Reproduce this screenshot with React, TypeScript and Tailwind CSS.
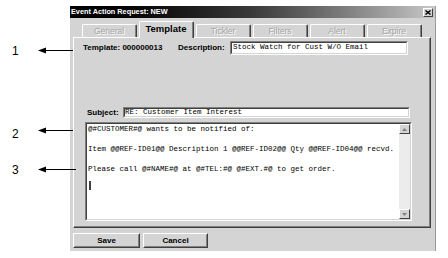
import React from "react";

const GRAY = "bg-[#d4d4d4]";

function Sunken({ className, innerClassName, children }: { className?: string; innerClassName?: string; children?: React.ReactNode }) {
  return (
    <div className={`border border-t-[#808080] border-l-[#808080] border-r-white border-b-white ${className ?? ""}`}>
      <div className={`w-full h-full border border-t-[#404040] border-l-[#404040] border-r-[#d4d4d4] border-b-[#d4d4d4] bg-white ${innerClassName ?? ""}`}>
        {children}
      </div>
    </div>
  );
}

function Raised({ className, children }: { className?: string; children?: React.ReactNode }) {
  return (
    <div className={`border border-t-white border-l-white border-r-[#404040] border-b-[#404040] ${className ?? ""}`}>
      <div className="w-full h-full border border-t-[#d4d4d4] border-l-[#d4d4d4] border-r-[#808080] border-b-[#808080] flex items-center justify-center">
        {children}
      </div>
    </div>
  );
}

function Tab({ label, active }: { label: string; active?: boolean }) {
  if (active) {
    return (
      <div className={`relative z-10 -mb-[1px] h-[17px] w-[55px] ${GRAY} border-t border-l border-r border-t-white border-l-white border-r-[#404040] rounded-t-[2px] flex items-start justify-center`}>
        <div className="w-full h-full border-r border-r-[#808080] flex items-center justify-center pb-[2px]">
          <span className="text-[9.5px] font-bold text-black leading-none">{label}</span>
        </div>
      </div>
    );
  }
  return (
    <div className={`h-[13px] w-[55px] ${GRAY} border-t border-l border-r border-t-white border-l-white border-r-[#404040] rounded-t-[2px]`}>
      <div className="w-full h-full border-r border-r-[#808080] flex items-center justify-center">
        <span className="text-[8.5px] text-[#a4a4a4] leading-none [text-shadow:1px_1px_0_#ffffff]">{label}</span>
      </div>
    </div>
  );
}

function Arrow({ top, right, label, labelTop }: { top: number; right: number; label: string; labelTop: number }) {
  return (
    <>
      <span
        className="absolute left-[12px] text-[12px] leading-none text-black font-['Liberation_Sans',Arial,sans-serif]"
        style={{ top: labelTop }}
      >
        {label}
      </span>
      <svg className="absolute left-[38px]" style={{ top: top - 3 }} width={right - 38} height={7}>
        <polygon points="0,3.5 8,0.5 8,6.5" fill="black" />
        <line x1={7} y1={3.5} x2={right - 38} y2={3.5} stroke="black" strokeWidth={1} />
      </svg>
    </>
  );
}

export default function App() {
  const mono = "font-['Liberation_Mono','Courier_New',monospace] text-[7.5px] text-black";
  return (
    <div className="relative w-[448px] h-[258px] bg-white overflow-hidden font-['Liberation_Sans',Arial,sans-serif]">
      <div className="flex pt-[6px] pl-[70px]">
        <div className={`w-[366px] h-[245px] ${GRAY} flex flex-col border-r border-r-[#9a9a9a]`}>
          {/* Title bar */}
          <div className="h-[12px] flex items-center justify-between bg-gradient-to-r from-black via-[#3a3a3a] to-[#c8c8c8]">
            <span className="pl-[1px] text-white font-bold text-[7.3px] leading-none">Event Action Request: NEW</span>
            <div className="mr-[2px] w-[10px] h-[9px] bg-[#d4d4d4] border border-t-white border-l-white border-r-[#404040] border-b-[#404040] flex items-center justify-center">
              <svg width="6" height="5" viewBox="0 0 6 5">
                <path d="M0.5 0.5 L5.5 4.5 M5.5 0.5 L0.5 4.5" stroke="black" strokeWidth="1.4" />
              </svg>
            </div>
          </div>

          {/* Tabs */}
          <div className="mt-[4px] h-[15px] flex items-end gap-[2px] pl-[12px]">
            <Tab label="General" />
            <Tab label="Template" active />
            <Tab label="Tickler" />
            <Tab label="Filters" />
            <Tab label="Alert" />
            <Tab label="Expire" />
          </div>

          {/* Panel */}
          <div className="ml-[3px] mr-[4px] h-[191px] border border-t-white border-l-white border-r-[#404040] border-b-[#404040]">
            <div className="w-full h-full border-r border-b border-r-[#808080] border-b-[#808080] flex flex-col">
              <div className="mt-[3px] flex items-center h-[14px] pl-[9px]">
                <span className="w-[95px] text-[8px] font-bold text-black leading-none">Template: 000000013</span>
                <span className="w-[52px] text-[8px] font-bold text-black leading-none">Description:</span>
                <Sunken className="w-[178px] h-[14px]" innerClassName="flex items-center pl-[1px]">
                  <span className={`${mono} leading-none whitespace-pre`}>Stock Watch for Cust W/O Email</span>
                </Sunken>
              </div>

              <div className="mt-[52px] flex items-center h-[11px] pl-[13px]">
                <span className="w-[36px] text-[8px] font-bold text-black leading-none">Subject:</span>
                <Sunken className="w-[287px] h-[11px]" innerClassName="flex items-center pl-[0px]">
                  <span className={`${mono} leading-none whitespace-pre`}>RE: Customer Item Interest</span>
                </Sunken>
              </div>

              <div className="mt-[4px] pl-[11px]">
                <Sunken className="w-[327px] h-[99px]" innerClassName="flex">
                  <div className={`flex-1 pl-[1px] ${mono} leading-[10px] whitespace-pre flex flex-col`}>
                    <div>@#CUSTOMER#@ wants to be notified of:</div>
                    <div>&nbsp;</div>
                    <div>Item @@REF-ID01@@ Description 1 @@REF-ID02@@ Qty @@REF-ID04@@ recvd.</div>
                    <div>&nbsp;</div>
                    <div>Please call @#NAME#@ at @#TEL:#@ @#EXT.#@ to get order.</div>
                    <div className="mt-[7px] ml-[1px] w-[2px] h-[9px] bg-[#404040]" />
                  </div>
                  <div className="w-[11px] h-full flex flex-col bg-[#ececec]">
                    <div className="w-[11px] h-[10px] bg-[#d4d4d4] border border-t-white border-l-white border-r-[#404040] border-b-[#404040] flex items-center justify-center">
                      <svg width="5" height="3" viewBox="0 0 5 3"><polygon points="2.5,0 5,3 0,3" fill="#808080" /></svg>
                    </div>
                    <div className="flex-1" />
                    <div className="w-[11px] h-[10px] bg-[#d4d4d4] border border-t-white border-l-white border-r-[#404040] border-b-[#404040] flex items-center justify-center">
                      <svg width="5" height="3" viewBox="0 0 5 3"><polygon points="0,0 5,0 2.5,3" fill="#808080" /></svg>
                    </div>
                  </div>
                </Sunken>
              </div>
            </div>
          </div>

          {/* Buttons */}
          <div className="mt-[5px] ml-[3px] flex gap-[3px]">
            <Raised className="w-[67px] h-[15px]">
              <span className="text-[8px] font-bold text-black leading-none">Save</span>
            </Raised>
            <Raised className="w-[65px] h-[15px]">
              <span className="text-[8px] font-bold text-black leading-none">Cancel</span>
            </Raised>
          </div>
        </div>
      </div>

      <Arrow top={50} right={73} label="1" labelTop={45} />
      <Arrow top={130} right={73} label="2" labelTop={128} />
      <Arrow top={169} right={76} label="3" labelTop={164} />
    </div>
  );
}
